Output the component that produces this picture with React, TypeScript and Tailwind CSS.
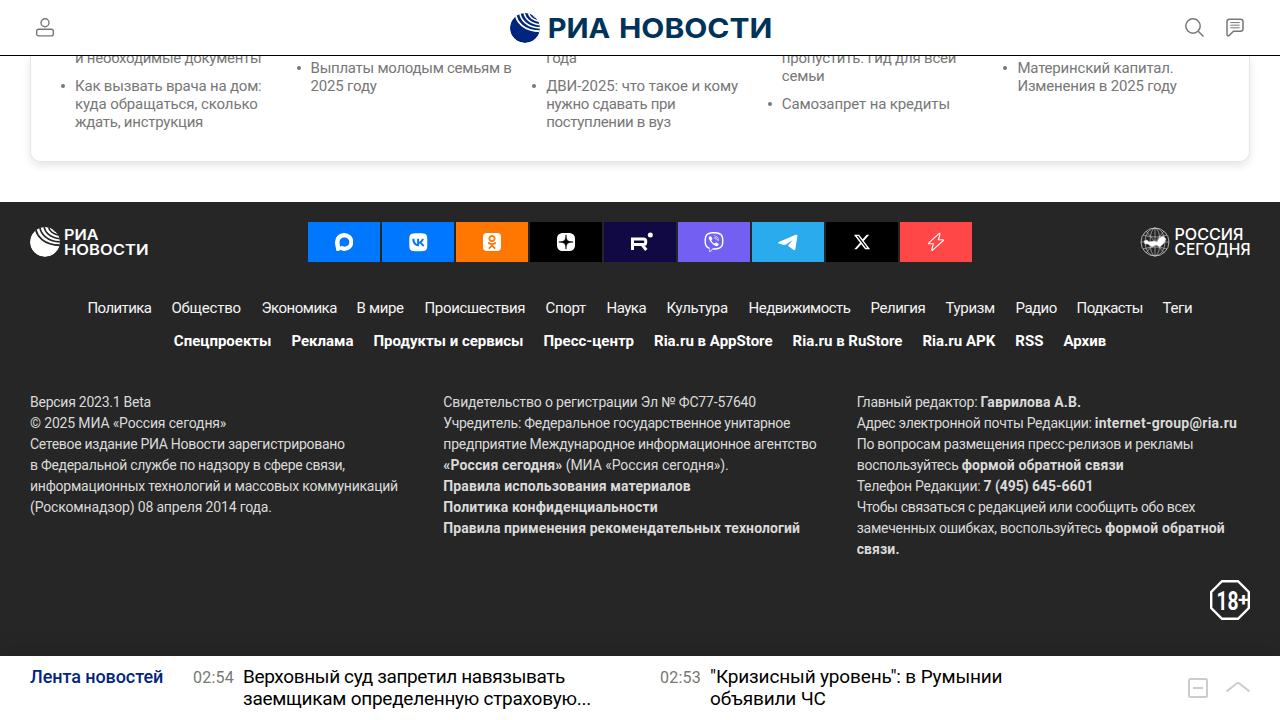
import type { ReactNode } from "react";
import { FaXTwitter, FaVk, FaOdnoklassniki, FaViber } from "react-icons/fa6";

function Globe({ className, color, gap }: { className: string; color: string; gap: string }) {
  return (
    <svg viewBox="0 0 30 30" className={className}>
      <clipPath id={"g" + color.slice(1)}>
        <circle cx="15" cy="15" r="15" />
      </clipPath>
      <g clipPath={`url(#g${color.slice(1)})`}>
        <circle cx="15" cy="15" r="15" fill={color} />
        <g fill="none" stroke={gap}>
          <path d="M5.5 0C6 9 14 18.6 31 18.2" strokeWidth="1.9" />
          <path d="M9.6 -1C10.5 7 17 14.8 31 15" strokeWidth="1.7" />
          <path d="M14 -1C14.5 5 20 11 31 11.8" strokeWidth="1.6" />
          <path d="M18.3 -1C19 3.5 23 7.6 31 8.6" strokeWidth="1.7" />
          <path d="M23 -1C23.5 1.5 26 4 30 5" strokeWidth="3.4" />
        </g>
      </g>
    </svg>
  );
}

function Item({ children }: { children: ReactNode }) {
  return (
    <li className="mb-[10px] flex whitespace-nowrap">
      <span className="mt-[7px] mr-[10px] size-[4px] shrink-0 rounded-full bg-[#777]" />
      <span>{children}</span>
    </li>
  );
}

const topics = [
  ["Политика", "w-[64px] tracking-[-0.6px]"],
  ["Общество", "w-[70px] tracking-[-0.22px]"],
  ["Экономика", "w-[75px] tracking-[-0.5px]"],
  ["В мире", "w-[48px] tracking-[-0.34px]"],
  ["Происшествия", "w-[101px] tracking-[-0.34px]"],
  ["Спорт", "w-[41px] tracking-[-0.34px]"],
  ["Наука", "w-[40px] tracking-[-0.5px]"],
  ["Культура", "w-[62px] tracking-[-0.25px]"],
  ["Недвижимость", "w-[102px] tracking-[-0.5px]"],
  ["Религия", "w-[55px] tracking-[-0.45px]"],
  ["Туризм", "w-[50px] tracking-[-0.34px]"],
  ["Радио", "w-[41px] tracking-[-0.5px]"],
  ["Подкасты", "w-[66px] tracking-[-0.55px]"],
  ["Теги", "w-[30px] tracking-[-0.3px]"],
];
const links = ["Спецпроекты", "Реклама", "Продукты и сервисы", "Пресс-центр", "Ria.ru в AppStore", "Ria.ru в RuStore", "Ria.ru APK", "RSS", "Архив"];
const tile = "flex h-10 w-[72px] items-center justify-center text-white";

function B({ children }: { children: ReactNode }) {
  return <b className="font-bold tracking-[0.12px]">{children}</b>;
}

export default function App() {
  return (
    <div className="flex h-[720px] w-[1280px] flex-col overflow-hidden bg-white font-['Roboto',sans-serif]">
      <header className="flex h-14 shrink-0 items-center justify-between border-b border-black px-[30px]">
        <div className="flex w-[90px] pl-[6px]">
          <svg viewBox="0 0 18 19" className="h-[19px] w-[18px]" fill="none" stroke="#777" strokeWidth="1.4">
            <circle cx="9" cy="4.8" r="4" />
            <rect x="0.7" y="11.3" width="16.6" height="6.6" rx="2" />
          </svg>
        </div>
        <div className="flex items-center pl-[1px]">
          <Globe className="mr-[8px] size-[30px]" color="#00257e" gap="#ffffff" />
          <svg viewBox="0 0 224 30" className="h-[30px] w-[224px] overflow-visible font-['Inter',sans-serif] font-bold" fill="#00335a">
            <text x="-.3" y="24.6" fontSize="27.3" textLength="62.5" lengthAdjust="spacingAndGlyphs">РИА</text>
            <text x="71" y="24.6" fontSize="27.3" textLength="153.2" lengthAdjust="spacingAndGlyphs">НОВОСТИ</text>
          </svg>
        </div>
        <div className="flex w-[90px] justify-end gap-[22px] pr-[6px]">
          <svg viewBox="0 0 19 19" className="size-[19px]" fill="none" stroke="#777" strokeWidth="1.5">
            <circle cx="8" cy="8" r="7.2" />
            <path d="M13.2 13.2L18.5 18.5" />
          </svg>
          <svg viewBox="0 0 18 19" className="h-[19px] w-[18px]" fill="none" stroke="#777" strokeWidth="1.5">
            <path d="M3.5 1.2H14.5Q17 1.2 17 3.5V11Q17 13.2 14.5 13.2H7.5L3 17.6Q1 18.4 1 16.3V3.5Q1 1.2 3.5 1.2Z" />
            <path d="M4.3 4.6H13.7M4.3 7.2H13.7M4.3 9.8H13.7" strokeWidth="1" />
          </svg>
        </div>
      </header>

      <section className="h-[146px] shrink-0 overflow-hidden px-[30px]">
        <div className="h-[106px] rounded-b-[10px] border border-t-0 border-[#e6e6e6] pl-[30px] shadow-[0_4px_8px_rgba(0,0,0,0.1)]">
          <div className="grid w-[1178px] grid-cols-5 items-start text-[15px] leading-[18px] tracking-[-0.19px] text-[#777]">
            <ul className="mt-[-7px]">
              <li className="mb-[10px] pl-[14px] tracking-[-0.27px] whitespace-nowrap">и необходимые документы</li>
              <Item>Как вызвать врача на дом:<br /><span className="tracking-[-0.1px]">куда обращаться, сколько</span><br /><span className="tracking-[-0.25px]">ждать, инструкция</span></Item>
            </ul>
            <ul className="mt-[3px]">
              <Item><span className="tracking-[-0.27px]">Выплаты молодым семьям в</span><br />2025 году</Item>
            </ul>
            <ul className="mt-[-7px]">
              <li className="mb-[10px] pl-[14px]">года</li>
              <Item><span className="tracking-[-0.1px]">ДВИ-2025: что такое и кому</span><br /><span className="tracking-[-0.32px]">нужно сдавать при</span><br /><span className="tracking-[-0.32px]">поступлении в вуз</span></Item>
            </ul>
            <ul className="mt-[-7px]">
              <li className="mb-[10px] pl-[14px] whitespace-nowrap">пропустить. Гид для всей<br />семьи</li>
              <Item><span className="tracking-[-0.13px]">Самозапрет на кредиты</span></Item>
            </ul>
            <ul className="mt-[3px]">
              <Item>Материнский капитал.<br />Изменения в 2025 году</Item>
            </ul>
          </div>
        </div>
      </section>

      <footer className="flex h-[454px] shrink-0 flex-col bg-[#262626] px-[30px] pt-5 text-white">
        <div className="flex h-10 items-center justify-between">
          <div className="flex w-[120px] items-center">
            <Globe className="mr-[4px] size-[30px]" color="#fffffe" gap="#262626" />
            <svg viewBox="0 0 85 30" className="h-[30px] w-[85px] shrink-0 overflow-visible font-['Inter',sans-serif] font-semibold" fill="#fff">
              <text x="0" y="12.6" fontSize="14.6" textLength="34.5" lengthAdjust="spacingAndGlyphs">РИА</text>
              <text x="0" y="27.6" fontSize="14.6" textLength="84.5" lengthAdjust="spacingAndGlyphs">НОВОСТИ</text>
            </svg>
          </div>
          <div className="flex gap-[2px]">
            <span className={`${tile} bg-[#07f]`}>
              <svg viewBox="0 0 18 18" className="size-[18px]">
                <path d="M9.2 0A9 9 0 1 1 9.5 18C8 18 6.8 17.6 5.7 16.8C4.5 18 1.2 18.7 1.2 17C1.2 15 0 12.5 0 9A9 9 0 0 1 9.2 0Z" fill="#fff" />
                <path d="M9.2 4.5A4.6 4.6 0 1 1 9 13.6Q7.7 13.5 6.7 12.8L5.1 13.8Q4.5 11.5 4.5 9A4.6 4.6 0 0 1 9.2 4.5Z" fill="#07f" />
              </svg>
            </span>
            <span className={`${tile} bg-[#07f]`}><FaVk size={20.6} /></span>
            <span className={`${tile} bg-[#ff7700]`}>
              <span className="flex size-[18px] items-center justify-center rounded-[4px] bg-white text-[#ff7700]"><FaOdnoklassniki size={14} /></span>
            </span>
            <span className={`${tile} bg-black`}>
              <svg viewBox="0 0 18 18" className="size-[18px]">
                <rect width="18" height="18" rx="5.5" fill="#fff" />
                <path d="M9 1.8C9.2 7.4 10.6 8.8 16.2 9C10.6 9.2 9.2 10.6 9 16.2C8.8 10.6 7.4 9.2 1.8 9C7.4 8.8 8.8 7.4 9 1.8Z" stroke="#000" strokeWidth=".6" />
              </svg>
            </span>
            <span className={`${tile} bg-[#100943]`}>
              <svg viewBox="0 0 22 20" className="ml-[3px] h-5 w-[22px]" fill="none" stroke="#fff">
                <path d="M1.5 18V7H12.5Q14.7 7 14.7 9V10.5Q14.7 12.6 12.5 12.6H2M11 12.6L15.3 18" strokeWidth="3" />
                <circle cx="19.3" cy="2.9" r="2.5" fill="#fff" stroke="none" />
              </svg>
            </span>
            <span className={`${tile} bg-[#7360f2]`}><FaViber size={20} /></span>
            <span className={`${tile} bg-[#2aabee]`}>
              <svg viewBox="0 0 20 17" className="ml-[-1px] h-[17px] w-5" fill="#fff">
                <path d="M.8 8L17.6 .8Q19.6 .2 19.4 2L17.4 14.8Q17 17 15.2 15.7L10.6 12.3Q9.8 11.6 10.6 10.8L14.8 6L8 10.6Q6.8 11.2 5.5 10.9L.8 9.6Q-.4 8.8 .8 8Z" />
              </svg>
            </span>
            <span className={`${tile} bg-black`}><FaXTwitter size={18} /></span>
            <span className={`${tile} bg-[#ff4747]`}>
              <svg viewBox="0 0 18 20" className="h-5 w-[18px]" fill="none" stroke="#fff" strokeWidth="1.1" strokeLinejoin="round">
                <path d="M12.2 1.4L1.5 11.2Q1.2 11.8 2 11.8H6.4L4.7 17.8Q4.7 18.8 5.6 18.2L16.4 8.5Q16.7 7.8 16 7.8H11.3L13.1 1.9Q13 1 12.2 1.4Z" />
              </svg>
            </span>
          </div>
          <div className="flex w-[120px] items-center justify-end">
            <svg viewBox="0 0 30 30" className="mr-[5px] size-[30px] shrink-0" fill="none" stroke="#ccc" strokeWidth=".6">
              <circle cx="15" cy="15" r="14" strokeWidth=".8" />
              <ellipse cx="15" cy="15" rx="5" ry="14" />
              <ellipse cx="15" cy="15" rx="10" ry="14" />
              <path d="M15 1V29M1 15H29M3 8Q15 12 27 8M3 22Q15 18 27 22M6 4L24 26M24 4L6 26" />
              <path d="M4 14L7 13L9 15L14 14L17 15L19 11L23 9L26 12L24 16L20 20L16 18L12 20L8 17L5 17Z" fill="#fff" />
            </svg>
            <svg viewBox="0 0 75 32" className="h-8 w-[75px] shrink-0 overflow-visible font-['Inter',sans-serif] font-medium" fill="#fff">
              <text x="-.5" y="13.8" fontSize="16.4" textLength="69" lengthAdjust="spacingAndGlyphs">РОССИЯ</text>
              <text x="-.5" y="29" fontSize="16.4" textLength="76" lengthAdjust="spacingAndGlyphs">СЕГОДНЯ</text>
            </svg>
          </div>
        </div>

        <nav className="mt-[30px] flex flex-col items-center text-[15px] leading-[33px] whitespace-nowrap">
          <div className="flex gap-5 text-[#f4f4f4]">{topics.map(([t, fit]) => <span key={t} className={fit}>{t}</span>)}</div>
          <div className="flex gap-5 font-bold">{links.map((t) => <span key={t}>{t}</span>)}</div>
        </nav>

        <div className="mt-[34px] grid grid-cols-3 gap-5 text-[14px] leading-[21px] tracking-[-0.25px] whitespace-nowrap text-[#dadada]">
          <div>
            Версия 2023.1 Beta<br /><span className="tracking-[-0.15px]">© 2025 МИА «Россия сегодня»</span><br /><span className="tracking-[-0.3px]">Сетевое издание РИА Новости зарегистрировано<br />в Федеральной службе по надзору в сфере связи,</span><br />информационных технологий и массовых коммуникаций<br /><span className="tracking-[-0.16px]">(Роскомнадзор) 08 апреля 2014 года.</span>
          </div>
          <div>
            <span className="tracking-[-0.16px]">Свидетельство о регистрации Эл № ФС77-57640</span><br /><span className="tracking-[-0.28px]">Учредитель: Федеральное государственное унитарное</span><br />предприятие Международное информационное агентство<br /><B>«Россия сегодня»</B> <span className="tracking-[-0.05px]">(МИА «Россия сегодня»).</span><br />
            <B>Правила использования материалов<br />Политика конфиденциальности<br /><span className="tracking-[0.09px]">Правила применения рекомендательных технологий</span></B>
          </div>
          <div>
            Главный редактор: <B>Гаврилова А.В.</B><br /><span className="tracking-[-0.3px]">Адрес электронной почты Редакции: </span><b className="tracking-[0.25px]">internet-group@ria.ru</b><br />По вопросам размещения пресс-релизов и рекламы<br />воспользуйтесь <B>формой обратной связи</B><br />Телефон Редакции: <b className="tracking-[-0.05px]">7 (495) 645-6601</b><br /><span className="tracking-[-0.33px]">Чтобы связаться с редакцией или сообщить обо всех</span><br />замеченных ошибках, воспользуйтесь <B>формой обратной<br />связи.</B>
          </div>
        </div>
        <div className="mt-5 flex justify-end">
          <svg viewBox="0 0 40 40" className="size-10 overflow-visible font-['Roboto',sans-serif] font-bold" fill="#fff">
            <path d="M12 1.2H28L38.8 12V28L28 38.8H12L1.2 28V12Z" fill="none" stroke="#fff" strokeWidth="2.4" />
            <text x="6.5" y="29.5" fontSize="25.5" textLength="22" lengthAdjust="spacingAndGlyphs">18</text>
            <text x="28" y="26.2" fontSize="18" textLength="11" lengthAdjust="spacingAndGlyphs">+</text>
          </svg>
        </div>
      </footer>

      <div className="flex h-16 shrink-0 bg-white px-[30px] pt-[10px] whitespace-nowrap shadow-[0_0_25px_rgba(0,0,0,0.2)]">
        <div className="w-[163px] text-[18px] leading-[22px] font-medium tracking-[-0.07px] text-[#00257e]">Лента новостей</div>
        <div className="flex w-[467px]">
          <span className="w-[50px] text-[16px] leading-[23px] tracking-[0.2px] text-[#777]">02:54</span>
          <span className="text-[19px] leading-[22px] text-black"><span className="tracking-[-0.37px]">Верховный суд запретил навязывать</span><br /><span className="tracking-[-0.26px]">заемщикам определенную страховую...</span></span>
        </div>
        <div className="flex grow">
          <span className="w-[50px] text-[16px] leading-[23px] tracking-[0.2px] text-[#777]">02:53</span>
          <span className="text-[19px] leading-[22px] tracking-[-0.15px] text-black">"Кризисный уровень": в Румынии<br />объявили ЧС</span>
        </div>
        <div className="mt-3 flex gap-[18px]">
          <svg viewBox="0 0 20 20" className="size-5" fill="none" stroke="#ccc" strokeWidth="2">
            <rect x="1" y="1" width="18" height="18" rx="1.5" />
            <path d="M5 10H15" />
          </svg>
          <svg viewBox="0 0 24 20" className="h-5 w-6" fill="none" stroke="#ccc" strokeWidth="2">
            <path d="M.5 13.5L11 5.2Q12 4.6 13 5.2L23.5 13.5" />
          </svg>
        </div>
      </div>
    </div>
  );
}
